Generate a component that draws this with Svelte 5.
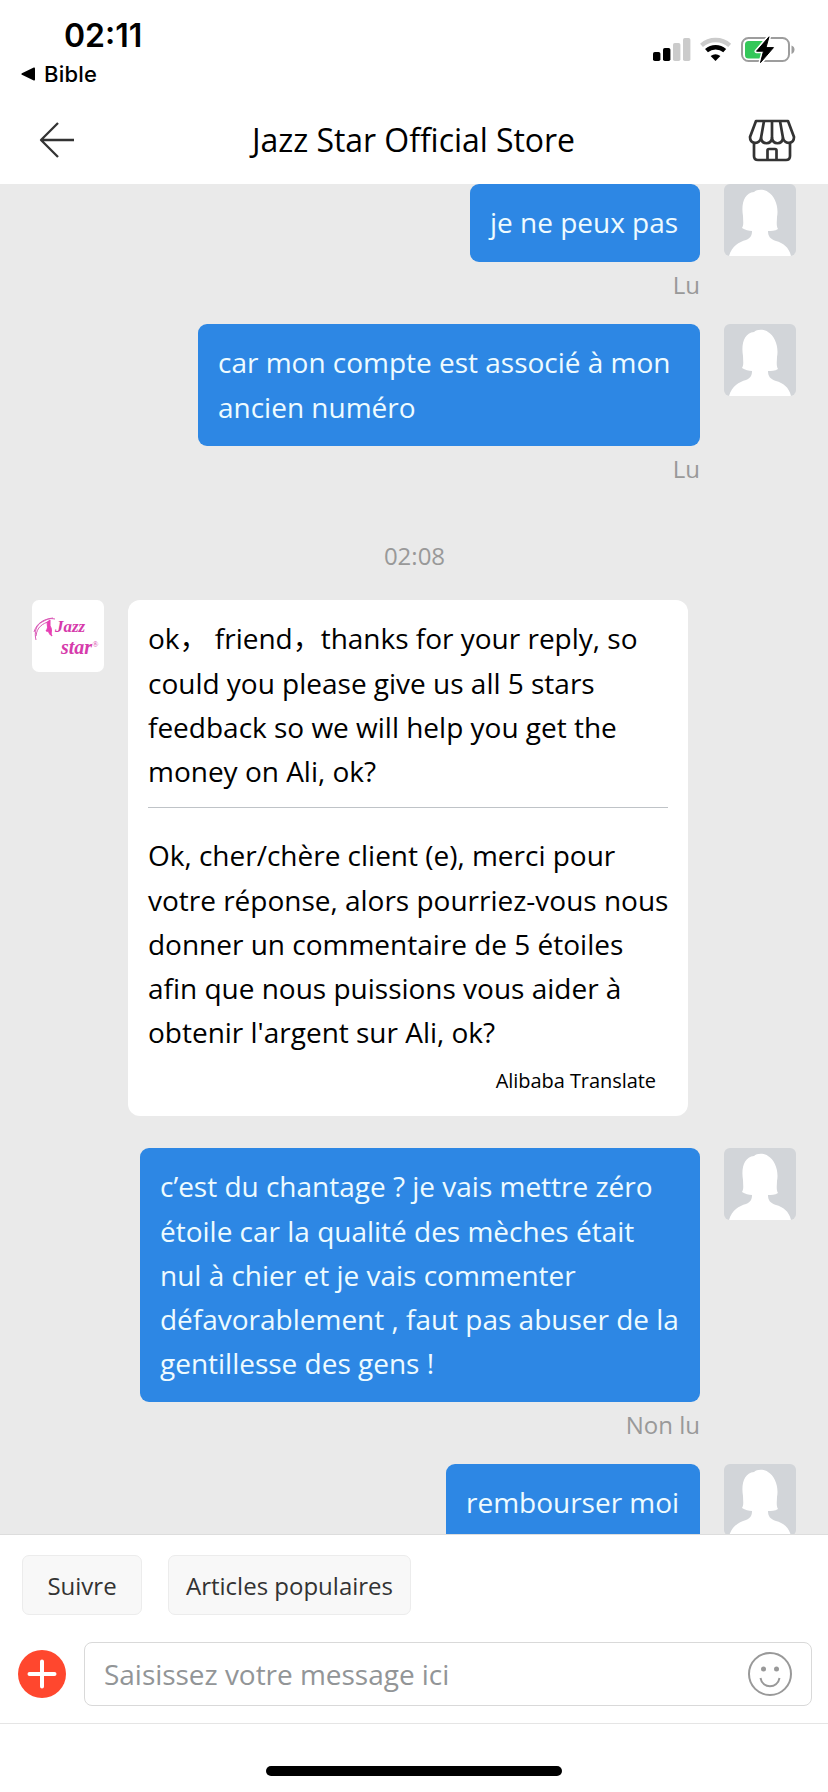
<script>
  const messages = [
    { id: 1, text: 'je ne peux pas', width: 230, status: 'Lu' },
    { id: 2, text: 'car mon compte est associé à mon\nancien numéro', width: 502, status: 'Lu' },
  ];
  const replies = [
    {
      id: 3,
      text: 'c’est du chantage ? je vais mettre zéro\nétoile car la qualité des mèches était\nnul à chier et je vais commenter\ndéfavorablement , faut pas abuser de la\ngentillesse des gens !',
      width: 560,
      status: 'Non lu',
    },
    { id: 4, text: 'rembourser moi', width: 254, status: '' },
  ];
  const original =
    'ok， friend，thanks for your reply, so\ncould you please give us all 5 stars\nfeedback so we will help you get the\nmoney on Ali, ok?';
  const translated =
    "Ok, cher/chère client (e), merci pour\nvotre réponse, alors pourriez-vous nous\ndonner un commentaire de 5 étoiles\nafin que nous puissions vous aider à\nobtenir l'argent sur Ali, ok?";
</script>

{#snippet lines(text)}
  <div class="para">
    {#each text.split('\n') as line}
      <div class="line">{line}</div>
    {/each}
  </div>
{/snippet}

{#snippet outgoing(m)}
  <div class="row out">
    <div class="stack">
      <div class="bubble blue" style="width: {m.width}px">{@render lines(m.text)}</div>
      {#if m.status}<div class="status">{m.status}</div>{/if}
    </div>
    <svg class="avatar" viewBox="0 0 72 72">
      <rect width="72" height="72" fill="#d2d5d9" />
      <path
        fill="#fff"
        d="M5 72C8 62 15 58 22 56C27 54 28 51 28 47C25 47 21 46 18 44C20 41 19 37 19 32C17 20 20 9 30 8C33 5 40 5 44 8C51 12 55 23 53 33C53 38 52 41 54 45C51 47 47 47 44 47C44 52 46 55 52 57C59 59 65 63 67 72Z"
      />
    </svg>
  </div>
{/snippet}

<div class="screen">
  <header>
    <div class="statusbar">
      <div class="clock">
        <div class="time">02:11</div>
        <div class="back-app">
          <svg width="15" height="14" viewBox="0 0 15 14"><path d="M14 1.4v11.2q0 1.2-1.2.8L.9 7.8q-1-.8 0-1.6L12.8.6Q14 .2 14 1.4Z" /></svg>
          <span>Bible</span>
        </div>
      </div>
      <svg class="indicators" width="144" height="30" viewBox="0 0 144 30">
        <rect x="1" y="17" width="7.4" height="9" rx="1.8" />
        <rect x="11" y="13" width="7.4" height="13" rx="1.8" />
        <rect x="21" y="8" width="7.4" height="18" rx="1.8" fill="#cbcbcb" />
        <rect x="31" y="3" width="7.4" height="23" rx="1.8" fill="#cbcbcb" />
        <path d="M49.5 10.3A21.5 21.5 0 0 1 77.7 10.3" fill="none" stroke="#cbcbcb" stroke-width="4.4" />
        <path d="M54.5 15.6A14 14 0 0 1 72.7 15.6" fill="none" stroke="#000" stroke-width="4.4" />
        <path d="M58.6 21Q63.5 17.4 68.4 21L63.5 26Z" />
        <rect x="90" y="3" width="47" height="23" rx="6.5" fill="none" stroke="#9d9d9d" stroke-width="2" />
        <path d="M139.5 10.5Q142.5 11.5 142.5 14.5T139.5 19Z" fill="#9d9d9d" />
        <rect x="93" y="6" width="21" height="17.5" rx="3.5" fill="#34c759" />
        <path d="M117 1.8L104.5 16.2H111.5L108.5 27.6L121.5 12.6H114Z" stroke="#fff" stroke-width="4" stroke-linejoin="round" />
        <path d="M117 1.8L104.5 16.2H111.5L108.5 27.6L121.5 12.6H114Z" stroke="#000" stroke-linejoin="round" />
      </svg>
    </div>
    <div class="titlebar">
      <svg width="36" height="38" viewBox="0 0 36 38" fill="none" stroke="#333" stroke-width="2.3">
        <path d="M19 2L2 19L19 36M2 19H35" stroke-linejoin="round" />
      </svg>
      <h1>Jazz Star Official Store</h1>
      <svg class="store" width="48" height="44" viewBox="0 0 48 44" fill="none" stroke="#333" stroke-width="2.7" stroke-linejoin="round">
        <path d="M8 2H40L46 18C46 25 37 26 35 19C34 26 25 26 24 19C23 26 14 26 13 19C11 26 2 25 2 18Z" />
        <path d="M16 2L13 19M24 2V19M32 2L35 19" />
        <path d="M6 24V37Q6 41 10 41H38Q42 41 42 37V24" />
        <path d="M19.5 41V31.5Q19.5 30 21 30H27Q28.5 30 28.5 31.5V41" />
      </svg>
    </div>
  </header>

  <main>
    {#each messages as m (m.id)}
      {@render outgoing(m)}
    {/each}
    <div class="stamp">02:08</div>
    <div class="row in">
      <div class="shop">
        <svg width="22" height="24" viewBox="0 0 22 24" fill="none">
          <path d="M3 23C1 15 3 8 9 5S16 1 22 2M3 19C4 10 9 7 17 4M1 15C4 5 12 2 20 1" stroke="#d957b5" stroke-width="1" />
          <path d="M17 3C11 6 17 9 13 14C17 14 15 17 19 19C17 15 20 13 17 9Z" fill="#e83fb4" stroke="#e83fb4" />
        </svg>
        <div class="words">
          <span class="jazz">Jazz</span>
          <span class="star">star<sup>®</sup></span>
        </div>
      </div>
      <div class="bubble white">
        {@render lines(original)}
        <hr />
        {@render lines(translated)}
        <div class="credit">Alibaba Translate</div>
      </div>
    </div>
    {#each replies as m (m.id)}
      {@render outgoing(m)}
    {/each}
  </main>

  <footer>
    <div class="chips">
      <button class="follow">Suivre</button>
      <button class="popular">Articles populaires</button>
    </div>
    <div class="compose">
      <svg width="48" height="48" viewBox="0 0 48 48">
        <circle cx="24" cy="24" r="24" fill="#ff472e" />
        <path d="M24 11.5V36.5M11.5 24H36.5" stroke="#fff" stroke-width="4" stroke-linecap="round" />
      </svg>
      <div class="field">
        <span>Saisissez votre message ici</span>
        <svg width="44" height="44" viewBox="0 0 44 44" fill="none" stroke="#999" stroke-width="2">
          <circle cx="22" cy="22" r="21" />
          <path d="M12.5 26C14.5 37 29.5 37 31.5 26" />
          <circle cx="15.5" cy="17" r="2.5" fill="#999" stroke="none" />
          <circle cx="28.5" cy="17" r="2.5" fill="#999" stroke="none" />
        </svg>
      </div>
    </div>
    <div class="home"><div></div></div>
  </footer>
</div>

<style>
  :global(body) { margin: 0; background: #fff; }
  .screen {
    width: 828px; height: 1792px; display: flex; flex-direction: column; overflow: hidden;
    background: #fff; color: #000; font-family: "Open Sans", "Noto Sans CJK SC", sans-serif;
  }
  .screen :global(*) { box-sizing: border-box; }
  svg { display: block; flex: none; }
  header { height: 184px; flex: none; }
  .statusbar { height: 97px; display: flex; justify-content: space-between; padding: 16px 32px 0 21px; font-family: Inter, sans-serif; }
  .time { font-size: 32px; line-height: 40px; font-weight: 600; padding-left: 43px; }
  .back-app { display: flex; align-items: center; gap: 8px; font-size: 22px; line-height: 30px; margin-top: 3px; font-weight: 500; letter-spacing: 0.2px; }
  .indicators { margin-top: 19px; }
  .titlebar { height: 87px; display: flex; align-items: center; justify-content: space-between; padding: 0 32px 2px 39px; }
  .store { margin-top: 2px; }
  h1 { margin: 0 0 0 4px; font-size: 32px; line-height: 40px; font-weight: 400; letter-spacing: -0.05px; }
  main { height: 1350px; flex: none; background: #eaeaea; overflow: hidden; }
  .row { display: flex; }
  .out { justify-content: flex-end; padding-right: 32px; gap: 24px; }
  .stack { display: flex; flex-direction: column; align-items: flex-end; }
  .avatar { width: 72px; height: 72px; border-radius: 6px; }
  .bubble { font-size: 28px; line-height: 44px; padding: 16px 20px 17px; }
  .line { height: 44px; white-space: pre; letter-spacing: -0.01px; }
  .line:first-child { height: 45px; }
  .blue { background: #2d87e4; color: #eefbff; border-radius: 9px; }
  .status { height: 62px; padding-top: 7px; font-size: 24px; line-height: 32px; color: #999; }
  .stamp { height: 92px; padding: 32px 0 0 1px; font-size: 24px; line-height: 32px; color: #999; text-align: center; }
  .in { padding-left: 32px; gap: 24px; margin-bottom: 32px; }
  .shop { width: 72px; height: 72px; border-radius: 7px; background: #fff; display: flex; padding: 17px 0 0 1px; overflow: hidden; }
  .words { display: flex; flex-direction: column; font-family: "Liberation Serif", serif; font-style: italic; font-weight: 700; color: #d63bab; }
  .jazz { font-size: 17px; line-height: 20px; }
  .star { font-size: 20px; line-height: 20px; padding-left: 6px; white-space: nowrap; }
  sup { font-size: 8px; line-height: 0; font-weight: 400; vertical-align: 7px; }
  .white { width: 560px; height: 516px; background: #fff; border-radius: 12px; }
  hr { margin: 14px 0 25px; border: 0; height: 1px; background: #bfc3c7; }
  .credit { font-size: 20px; line-height: 30px; text-align: right; padding-right: 12px; margin-top: 12px; letter-spacing: -0.06px; }
  footer { height: 258px; flex: none; border-top: 1px solid #ddd; background: #fff; }
  .chips { display: flex; gap: 26px; padding: 20px 22px 0; }
  button { height: 60px; padding: 1px 0 0; border: 1px solid #ececec; border-radius: 7px; background: #f8f8f8; color: #333; font: 24px/32px "Open Sans", sans-serif; }
  .follow { width: 120px; }
  .popular { width: 243px; }
  .compose { display: flex; align-items: center; gap: 18px; padding: 27px 16px 17px 18px; border-bottom: 1px solid #e5e5e5; }
  .field { flex: 1; height: 64px; border: 1px solid #d9d9d9; border-radius: 8px; display: flex; align-items: center; justify-content: space-between; padding: 0 19px; font-size: 28px; letter-spacing: -0.03px; color: #929597; }
  .home { padding-top: 42px; display: flex; justify-content: center; }
  .home div { width: 296px; height: 10px; border-radius: 5px; background: #000; }
</style>
